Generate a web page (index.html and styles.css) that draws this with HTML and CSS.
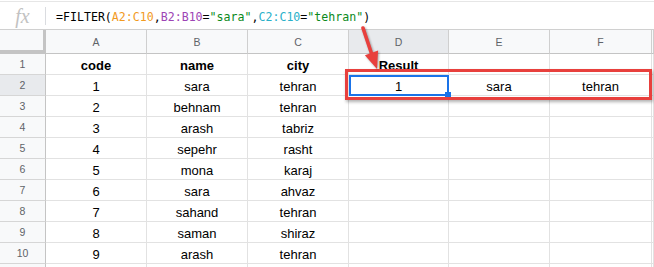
FILE: index.html
```html
<!DOCTYPE html>
<html>
<head>
<meta charset="utf-8">
<link rel="stylesheet" href="styles.css">
</head>
<body>
<div class="page">
  <div class="formula-bar">
    <span class="fx">fx</span>
    <span class="sep"></span>
    <span class="formula">=FILTER(<span class="r1">A2:C10</span>,<span class="r2">B2:B10</span>=<span class="str">"sara"</span>,<span class="r3">C2:C10</span>=<span class="str">"tehran"</span>)</span>
  </div>
  <div class="sheet">
    <div class="corner"></div>
    <div class="ch">A</div><div class="ch">B</div><div class="ch">C</div><div class="ch sel">D</div><div class="ch">E</div><div class="ch">F</div><div class="ch last"></div>

    <div class="rh">1</div><div class="c b">code</div><div class="c b">name</div><div class="c b">city</div><div class="c b">Result</div><div class="c"></div><div class="c"></div><div class="c"></div>
    <div class="rh sel">2</div><div class="c">1</div><div class="c">sara</div><div class="c">tehran</div><div class="c selected">1</div><div class="c">sara</div><div class="c">tehran</div><div class="c"></div>
    <div class="rh">3</div><div class="c">2</div><div class="c">behnam</div><div class="c">tehran</div><div class="c"></div><div class="c"></div><div class="c"></div><div class="c"></div>
    <div class="rh">4</div><div class="c">3</div><div class="c">arash</div><div class="c">tabriz</div><div class="c"></div><div class="c"></div><div class="c"></div><div class="c"></div>
    <div class="rh">5</div><div class="c">4</div><div class="c">sepehr</div><div class="c">rasht</div><div class="c"></div><div class="c"></div><div class="c"></div><div class="c"></div>
    <div class="rh">6</div><div class="c">5</div><div class="c">mona</div><div class="c">karaj</div><div class="c"></div><div class="c"></div><div class="c"></div><div class="c"></div>
    <div class="rh">7</div><div class="c">6</div><div class="c">sara</div><div class="c">ahvaz</div><div class="c"></div><div class="c"></div><div class="c"></div><div class="c"></div>
    <div class="rh">8</div><div class="c">7</div><div class="c">sahand</div><div class="c">tehran</div><div class="c"></div><div class="c"></div><div class="c"></div><div class="c"></div>
    <div class="rh">9</div><div class="c">8</div><div class="c">saman</div><div class="c">shiraz</div><div class="c"></div><div class="c"></div><div class="c"></div><div class="c"></div>
    <div class="rh">10</div><div class="c">9</div><div class="c">arash</div><div class="c">tehran</div><div class="c"></div><div class="c"></div><div class="c"></div><div class="c"></div>
    <div class="rh"></div><div class="c"></div><div class="c"></div><div class="c"></div><div class="c"></div><div class="c"></div><div class="c"></div><div class="c"></div>
  </div>

  <div class="annot-box"></div>
  <svg class="annot-arrow" width="60" height="60" viewBox="0 0 60 60">
    <line x1="23" y1="8" x2="32" y2="35" stroke="#e8403d" stroke-width="3.6" stroke-linecap="round"/>
    <polygon points="37,49 24.9,35.2 38.1,30.6" fill="#e8403d"/>
  </svg>
</div>
</body>
</html>
```

FILE: styles.css
```css
html, body {
  margin: 0;
  padding: 0;
  background: #ffffff;
  overflow: hidden;
}

.page {
  position: relative;
  width: 654px;
  height: 267px;
  overflow: hidden;
  font-family: "Liberation Sans", Arial, sans-serif;
}

.formula-bar {
  box-sizing: border-box;
  height: 29px;
  border-top: 1px solid #e6e6e6;
  border-bottom: 1px solid #d0d0d0;
  display: flex;
  align-items: center;
  margin-top: 1px;
}

.fx {
  width: 45px;
  text-align: center;
  font-family: "Liberation Serif", "DejaVu Serif", serif;
  font-style: italic;
  font-size: 20px;
  color: #c2c2c2;
  line-height: 1;
  margin-top: 1px;
}

.sep {
  width: 1px;
  height: 18px;
  background: #dadce0;
  margin-right: 10px;
}

.formula {
  font-family: "DejaVu Sans Mono", "Liberation Mono", monospace;
  font-size: 11.6px;
  color: #000;
  white-space: pre;
  margin-top: 2px;
}

.r1 { color: #f29b1f; }
.r2 { color: #9d44b5; }
.r3 { color: #2ab0c9; }
.str { color: #0b8a1c; }

.sheet {
  display: grid;
  grid-template-columns: 46px 101px 101px 101px 100px 101px 102px 1fr;
  grid-template-rows: 24px;
  grid-auto-rows: 21px;
}

.sheet > div {
  box-sizing: border-box;
}

.corner {
  background: #f8f9fa;
  border-right: 3px solid #c4c4c4;
  border-bottom: 4px solid #c4c4c4;
}

.ch {
  background: #f8f9fa;
  border-right: 1px solid #cfcfcf;
  border-bottom: 1px solid #c4c4c4;
  color: #5f6368;
  font-size: 10.5px;
  display: flex;
  align-items: center;
  justify-content: center;
}

.ch.sel,
.rh.sel {
  background: #e8eaed;
}

.rh {
  background: #f8f9fa;
  border-right: 1px solid #c4c4c4;
  border-bottom: 1px solid #d6d6d6;
  color: #5f6368;
  font-size: 10.5px;
  display: flex;
  align-items: center;
  justify-content: center;
}

.c {
  border-right: 1px solid #e2e2e2;
  border-bottom: 1px solid #e2e2e2;
  font-size: 13px;
  line-height: 15px;
  color: #000;
  display: flex;
  align-items: flex-end;
  justify-content: center;
  padding-bottom: 1px;
  white-space: nowrap;
}

.c.b {
  font-weight: bold;
}

.selected {
  position: relative;
}

.selected::before {
  content: "";
  position: absolute;
  top: 0;
  left: 0;
  right: -1px;
  bottom: -1px;
  border: 2px solid #1a73e8;
}

.selected::after {
  content: "";
  position: absolute;
  right: -3px;
  bottom: -3px;
  width: 6px;
  height: 6px;
  background: #1a73e8;
}

.annot-box {
  position: absolute;
  left: 345px;
  top: 69px;
  width: 307px;
  height: 31px;
  box-sizing: border-box;
  border: 3px solid #e8403d;
  box-shadow: 1px 2px 3px rgba(0, 0, 0, 0.3);
}

.annot-arrow {
  position: absolute;
  left: 340px;
  top: 20px;
  filter: drop-shadow(1px 1px 1px rgba(0, 0, 0, 0.35));
}
```
